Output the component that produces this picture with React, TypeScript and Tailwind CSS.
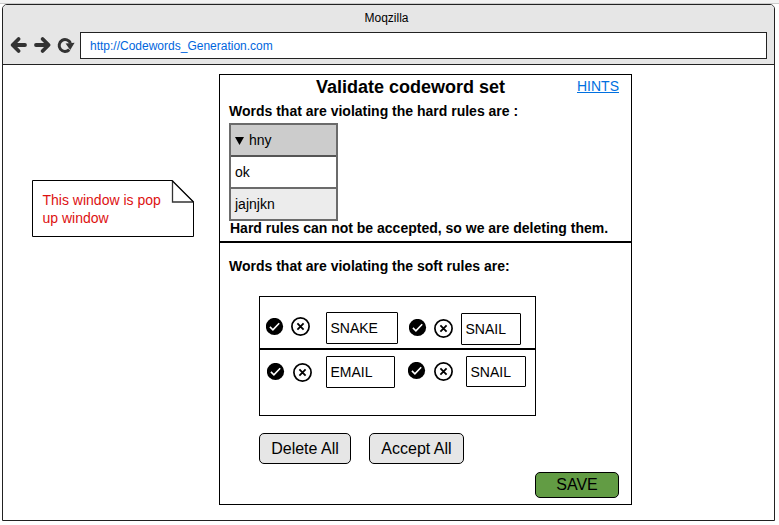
import React from 'react';

const Check = ({ className = '' }: { className?: string }) => (
  <svg className={`block h-[18px] w-[18px] shrink-0 ${className}`} viewBox="0 0 18 18">
    <circle cx="8.5" cy="8.5" r="8.6" fill="#000" />
    <path d="M3.9 8.9 6.9 11.8 13.2 5.2" fill="none" stroke="#fff" strokeWidth="1.6" />
  </svg>
);

const Cross = ({ className = '' }: { className?: string }) => (
  <svg className={`block h-5 w-5 shrink-0 ${className}`} viewBox="0 0 20 20">
    <circle cx="9.5" cy="9.5" r="8.6" fill="#fff" stroke="#000" strokeWidth="1.7" />
    <path d="M6.4 6.4 12.6 12.6M12.6 6.4 6.4 12.6" fill="none" stroke="#000" strokeWidth="1.8" />
  </svg>
);

const Word = ({ text, className = '' }: { text: string; className?: string }) => (
  <div className={`flex shrink-0 items-center rounded-[1px] border border-black bg-white pl-[3.5px] text-[14px] leading-4 ${className}`}>
    {text}
  </div>
);

function Header() {
  return (
    <header className="flex h-[60px] flex-col border-b border-[#222] bg-[#e6e6e6]">
      <div className="h-[27px] pt-[5px] pr-1 text-center text-[12px] leading-4">
        <span>Moqzilla</span>
      </div>
      <div className="flex">
        <svg className="block h-[27px] w-[77px] shrink-0" viewBox="3 32 77 27" fill="none" stroke="#333" strokeWidth="3.8">
          <g strokeLinecap="round" strokeLinejoin="round">
            <path d="M25 45H13M18.6 39 12.6 45 18.6 51" />
            <path d="M36 45H48M42.6 39 48.6 45 42.6 51" />
          </g>
          <path d="M69.3 49.6A5.9 5.9 0 1 1 70.5 43.2" strokeWidth="3" />
          <path d="M65.6 43.6 74.6 42.8 70.2 50Z" fill="#333" stroke="none" />
        </svg>
        <div className="flex h-[27px] w-[687px] items-center border border-[#222] bg-white pl-[9px] text-[12px] text-[#0066dd]">
          http://Codewords_Generation.com
        </div>
      </div>
    </header>
  );
}

function Note() {
  return (
    <aside className="relative mt-[115px] ml-[29px] h-[57px] w-[162px] shrink-0">
      <svg className="absolute inset-0 h-[57px] w-[162px]" viewBox="0 0 162 57" fill="#fff" stroke="#000">
        <path d="M.5 .5H140L161.5 22V56.5H.5Z" />
        <path d="M140.5 .5V22H161.5" stroke="#333" strokeWidth="1.3" />
        <path d="M140 .5 161.5 22" fill="none" strokeWidth="1.3" />
      </svg>
      <p className="relative pt-[11px] pl-[10.5px] text-[14px] leading-[18px] text-[#dd1111]">
        This window is pop
        <br />
        up window
      </p>
    </aside>
  );
}

export default function App() {
  return (
    <div className="flex h-[525px] w-[779px] flex-col overflow-hidden bg-white font-['Liberation_Sans',Arial,sans-serif] text-black">
      <div className="h-1 shrink-0 border-b border-[#ccc] bg-[#f2f2f2]" />
      <main className="ml-[2px] h-[517px] w-[773px] overflow-hidden rounded-t-[5px] border border-[#222]">
        <Header />
        <div className="flex items-start">
          <Note />
          <div className="mt-[9px] ml-[25px] h-[431px] w-[413px] shrink-0 border border-black">
            <section className="h-[168px] border-b-2 border-black pl-[9px]">
              <div className="flex h-[27px]">
                <h1 className="ml-[87px] w-[261px] text-[18px] leading-[25px] font-bold">Validate codeword set</h1>
                <a className="text-[14px] leading-[23px] text-[#0070e0] underline">HINTS</a>
              </div>
              <p className="h-[21px] text-[14px] leading-[19px] font-bold">Words that are violating the hard rules are :</p>
              <div className="flex h-[98px] w-[109px] flex-col border-2 border-[#6b6b6b] text-[14px]">
                <div className="flex h-8 items-center border-b-2 border-[#555] bg-[#ccc] pl-1">
                  <svg className="mt-[2px] mr-[5px] block h-2 w-[9px]" viewBox="0 0 9 8">
                    <path d="M0 0H9L4.5 8Z" />
                  </svg>
                  hny
                </div>
                <div className="flex h-8 items-center border-b-2 border-[#6b6b6b] pl-1">ok</div>
                <div className="flex h-[30px] items-center bg-[#ececec] pl-1">jajnjkn</div>
              </div>
              <p className="pl-px text-[14px] leading-[15px] font-bold">Hard rules can not be accepted, so we are deleting them.</p>
            </section>
            <section className="pl-[9px]">
              <p className="pt-[14px] text-[14px] leading-[19px] font-bold">Words that are violating the soft rules are:</p>
              <div className="mt-5 ml-[30px] h-[120px] w-[277px] border border-black">
                <div className="flex h-[53px] items-start border-b-2 border-black pl-[6px]">
                  <Check className="mt-[21px]" />
                  <Cross className="mt-5 ml-[7px]" />
                  <Word text="SNAKE" className="mt-[15px] ml-[15px] h-8 w-[72px]" />
                  <Check className="mt-[22px] ml-[11px]" />
                  <Cross className="mt-[22px] ml-[7px]" />
                  <Word text="SNAIL" className="mt-4 ml-[7px] h-8 w-[60px]" />
                </div>
                <div className="flex items-start pl-[7px]">
                  <Check className="mt-[13px]" />
                  <Cross className="mt-[13px] ml-2" />
                  <Word text="EMAIL" className="mt-[6px] ml-[13px] h-8 w-[69px]" />
                  <Check className="mt-3 ml-[13px]" />
                  <Cross className="mt-3 ml-2" />
                  <Word text="SNAIL" className="mt-[6px] ml-3 h-[31px] w-[60px]" />
                </div>
              </div>
              <div className="mt-[17px] ml-[30px] flex gap-[18px] text-[16px]">
                <button className="h-[31px] w-[92px] rounded-[5px] border border-black bg-[#e6e6e6]">Delete All</button>
                <button className="h-[31px] w-[95px] rounded-[5px] border border-black bg-[#e6e6e6]">Accept All</button>
              </div>
              <button className="mt-2 ml-[306px] block h-[26px] w-[84px] rounded-[5px] border border-black bg-[#629c44] text-[16px] leading-6">
                SAVE
              </button>
            </section>
          </div>
        </div>
      </main>
    </div>
  );
}
